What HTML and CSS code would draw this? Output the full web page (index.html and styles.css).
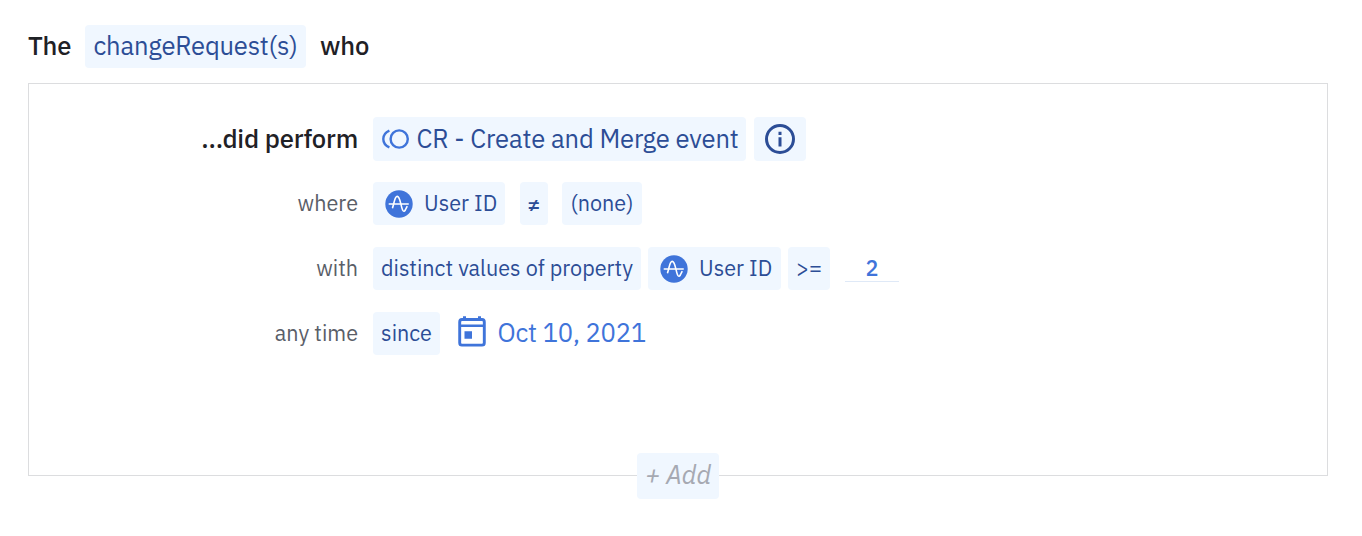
FILE: index.html
```html
<!DOCTYPE html>
<html lang="en">
<head>
<meta charset="utf-8">
<title>Segment definition</title>
<link rel="stylesheet" href="styles.css">
</head>
<body>
<svg class="defs" width="0" height="0" aria-hidden="true">
  <symbol id="amplitude" viewBox="0 0 28 28">
    <circle cx="14" cy="14" r="13.7" fill="#3f74da"/>
    <path d="M4.3 14H23.2M7.6 17.6C9.3 13 9.5 6.4 12.2 6.4C15.3 6.4 15.7 16 17.6 20Q18.9 22.6 20.3 20L22 16.6" fill="none" stroke="#fff" stroke-width="1.6" stroke-linecap="round" stroke-linejoin="round"/>
  </symbol>
</svg>
<header class="heading">
  <span class="strong">The</span>
  <span class="chip chip-group">changeRequest(s)</span>
  <span class="strong">who</span>
</header>
<main class="panel">
  <div class="row row-event">
    <span class="label strong">...did perform</span>
    <span class="chip chip-event"><svg class="i-event" viewBox="0 0 28 20"><circle cx="17.2" cy="10" r="8.6"/><path d="M7.4 1.6C3.6 3.2 1.3 6 1.3 10S3.6 16.8 7.4 18.4"/></svg><span class="text">CR - Create and Merge event</span></span>
    <span class="chip chip-info"><svg class="i-info" viewBox="0 0 30 30"><circle cx="15" cy="15" r="13.5"/><path d="M15 13.3V22.4M15 7.7V11"/></svg></span>
  </div>
  <div class="row">
    <span class="label text">where</span>
    <span class="chip chip-prop"><svg class="i-amp"><use href="#amplitude"/></svg><span class="text">User ID</span></span>
    <span class="chip chip-op">≠</span>
    <span class="chip chip-none text">(none)</span>
  </div>
  <div class="row">
    <span class="label text">with</span>
    <span class="chip chip-distinct text">distinct values of property</span>
    <span class="chip chip-prop chip-prop-wide"><svg class="i-amp"><use href="#amplitude"/></svg><span class="text">User ID</span></span>
    <span class="chip chip-gte text">&gt;=</span>
    <span class="count">2</span>
  </div>
  <div class="row">
    <span class="label text">any time</span>
    <span class="chip chip-since text">since</span>
    <svg class="i-cal" viewBox="0 0 28 31"><path d="M4 3.5H24Q26.3 3.5 26.3 6V26.7Q26.3 29.1 24 29.1H4Q1.7 29.1 1.7 26.7V6Q1.7 3.5 4 3.5Z" fill="none" stroke="#3f74da" stroke-width="2.9"/><path d="M2 8.5H26V11H2ZM5 .3H8V5H5ZM20 .3H23V5H20ZM6.5 15.3H14V22.7H6.5Z" fill="#3f74da"/></svg>
    <span class="date">Oct 10, 2021</span>
  </div>
  <span class="add">+ Add</span>
</main>
</body>
</html>
```
FILE: styles.css
```css
.defs {
  position: absolute;
}
body {
  box-sizing: border-box;
  min-height: 536px;
  margin: 0;
  padding: 25px 34px 0 28px;
  background: #fff;
  font-family: "IBM Plex Sans", Roboto, sans-serif;
  font-size: 21.6px;
  color: #5a5e68;
}
.text {
  padding-bottom: 2px;
}
.heading {
  display: flex;
  height: 43px;
  align-items: center;
  gap: 15px;
  margin-bottom: 15px;
}
.strong {
  padding-bottom: 2px;
  font-weight: 500;
  font-size: 25.6px;
  letter-spacing: -0.2px;
  color: #1f2126;
}
.heading .strong:first-child {
  width: 42px;
}
.chip {
  box-sizing: border-box;
  display: flex;
  align-items: center;
  justify-content: center;
  height: 43px;
  border-radius: 4px;
  background: #f0f7ff;
  color: #2c4d96;
  white-space: nowrap;
  flex: none;
}
.chip-group {
  width: 221px;
  margin-right: -1px;
  padding-bottom: 2px;
  font-size: 25.6px;
  letter-spacing: -0.2px;
}
.panel {
  box-sizing: border-box;
  position: relative;
  width: 1300px;
  height: 393px;
  padding-top: 33px;
  border: 1px solid #dcdddf;
}
.row {
  display: flex;
  align-items: center;
  height: 43px;
  margin-bottom: 22px;
}
.label {
  width: 329px;
  margin-right: 15px;
  text-align: right;
  white-space: nowrap;
  flex: none;
}
.row-event {
  height: 44px;
  margin-bottom: 21px;
}
.row-event .chip {
  height: 44px;
}
.chip-event {
  width: 373px;
  margin-right: 8px;
  padding-left: 9px;
  justify-content: flex-start;
  gap: 6.5px;
  font-size: 25.6px;
  letter-spacing: -0.16px;
}
.chip-info {
  width: 52px;
}
.i-event {
  width: 28px;
  height: 20px;
  fill: none;
  stroke: #3f74da;
  stroke-width: 2.4;
}
.i-info {
  width: 30px;
  height: 30px;
  fill: none;
  stroke: #2c4d96;
  stroke-width: 3;
}
.chip-prop {
  width: 132px;
  margin-right: 8px;
  padding-left: 12px;
  justify-content: flex-start;
  gap: 11px;
}
.chip-prop-wide {
  width: 133px;
  margin-right: 7px;
}
.i-amp {
  width: 28px;
  height: 28px;
}
.chip-op {
  width: 28px;
  margin: 0 14px 0 7px;
  font-weight: 500;
}
.chip-none {
  width: 80px;
}
.chip-distinct {
  width: 268px;
  margin-right: 7px;
}
.chip-gte {
  width: 42px;
}
.count {
  width: 54px;
  height: 27px;
  margin: 0 0 2px 15px;
  line-height: 29px;
  text-align: center;
  font-weight: 500;
  color: #3f74da;
  border-bottom: 1px solid #dfe9f7;
}
.chip-since {
  width: 67px;
  margin-right: 18px;
}
.i-cal {
  width: 28px;
  height: 31px;
  margin: 0 11.5px 4px 0;
}
.date {
  padding-bottom: 2px;
  font-size: 25.6px;
  letter-spacing: -0.22px;
  color: #3f74da;
}
.add {
  position: absolute;
  left: 608px;
  top: 369px;
  width: 82px;
  height: 46px;
  box-sizing: border-box;
  padding-bottom: 3px;
  display: flex;
  align-items: center;
  justify-content: center;
  border-radius: 4px;
  background: #f0f7ff;
  color: #a6a9b2;
  font-size: 25.6px;
  letter-spacing: -0.1px;
  font-style: italic;
}
```
